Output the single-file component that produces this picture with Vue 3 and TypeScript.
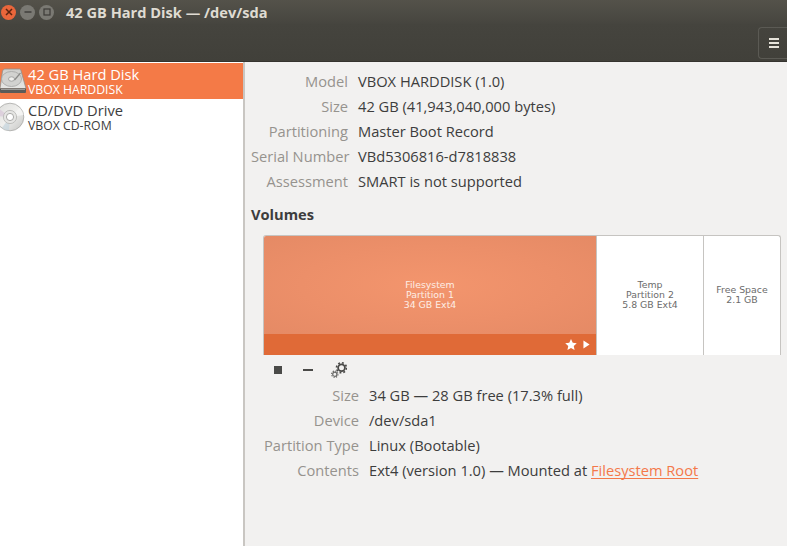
<script setup lang="ts">
interface Row {
  label: string;
  value: string;
}

interface Partition {
  id: string;
  lines: string[];
}

const diskRows: Row[] = [
  { label: 'Model', value: 'VBOX HARDDISK (1.0)' },
  { label: 'Size', value: '42 GB (41,943,040,000 bytes)' },
  { label: 'Partitioning', value: 'Master Boot Record' },
  { label: 'Serial Number', value: 'VBd5306816-d7818838' },
  { label: 'Assessment', value: 'SMART is not supported' },
]

const partitions: Partition[] = [
  { id: 'temp', lines: ['Temp', 'Partition 2', '5.8 GB Ext4'] },
  { id: 'free', lines: ['Free Space', '2.1 GB'] },
]

const volumeRows: Row[] = [
  { label: 'Size', value: '34 GB — 28 GB free (17.3% full)' },
  { label: 'Device', value: '/dev/sda1' },
  { label: 'Partition Type', value: 'Linux (Bootable)' },
]
</script>

<template>
  <div class="window">
    <header class="titlebar">
      <div class="controls">
        <span class="ctl close">
          <svg width="8" height="8" viewBox="0 0 8 8"><path d="M1 1l6 6M7 1L1 7" stroke="#5a2410" stroke-width="1.5" /></svg>
        </span>
        <span class="ctl">
          <svg width="8" height="8" viewBox="0 0 8 8"><path d="M0.5 4h7" stroke="#3c3b37" stroke-width="1.4" /></svg>
        </span>
        <span class="ctl">
          <svg width="8" height="8" viewBox="0 0 8 8"><rect x="1" y="1" width="6" height="6" fill="none" stroke="#3c3b37" stroke-width="1.2" /></svg>
        </span>
      </div>
      <span class="title">42 GB Hard Disk — /dev/sda</span>
    </header>

    <div class="toolbar">
      <button class="menu-btn" type="button">
        <span></span><span></span><span></span>
      </button>
    </div>

    <div class="body">
      <aside class="sidebar">
        <div class="device selected">
          <svg class="device-icon" width="28" height="28" viewBox="0 0 28 28">
            <defs>
              <linearGradient id="hd" x1="0" y1="0" x2="0" y2="1">
                <stop offset="0" stop-color="#cfcfcd" />
                <stop offset="1" stop-color="#e6e6e4" />
              </linearGradient>
            </defs>
            <path d="M4.5 2.5Q5 2 6 2h14.5q1 0 1.3 1L27 21.5H1L3.5 4z" fill="url(#hd)" stroke="#8f8f8d" stroke-width="0.8" />
            <ellipse cx="12.5" cy="12" rx="10" ry="7.5" fill="#d2d2d0" stroke="#a5a5a3" stroke-width="0.8" />
            <ellipse cx="12.5" cy="12" rx="3" ry="2.2" fill="#efefed" stroke="#969694" stroke-width="0.8" />
            <path d="M21.5 6l-6 7" stroke="#8a8a88" stroke-width="1.2" />
            <path d="M1 21.5h26V25q0 1-1 1H2q-1 0-1-1z" fill="#5b5b59" />
            <path d="M2 22.5h24" stroke="#9c9c9a" stroke-width="1" />
          </svg>
          <div class="device-text">
            <div class="device-name">42 GB Hard Disk</div>
            <div class="device-sub">VBOX HARDDISK</div>
          </div>
        </div>
        <div class="device">
          <svg class="device-icon" width="28" height="30" viewBox="0 0 28 30">
            <defs>
              <linearGradient id="cd" x1="0" y1="0" x2="1" y2="1">
                <stop offset="0" stop-color="#dcdcda" />
                <stop offset="0.5" stop-color="#efefed" />
                <stop offset="1" stop-color="#c4c4c2" />
              </linearGradient>
            </defs>
            <circle cx="11" cy="15" r="13.8" fill="url(#cd)" stroke="#a8a8a6" stroke-width="0.8" />
            <path d="M11 15L1 7.5Q-1 11-1.5 14z" fill="#d9c8d8" opacity="0.7" />
            <path d="M11 15L3 26Q7 28.5 10 28.5z" fill="#c6d6de" opacity="0.7" />
            <path d="M11 15L21 6Q24 10 24.5 13z" fill="#f8f8f6" opacity="0.8" />
            <circle cx="11" cy="15" r="6.6" fill="#e6e6e4" stroke="#b5b5b3" stroke-width="0.8" />
            <circle cx="11" cy="15" r="3.6" fill="#fff" stroke="#989896" stroke-width="0.8" />
          </svg>
          <div class="device-text">
            <div class="device-name">CD/DVD Drive</div>
            <div class="device-sub">VBOX CD-ROM</div>
          </div>
        </div>
      </aside>

      <main class="content">
        <div class="props disk-props">
          <template v-for="row in diskRows" :key="row.label">
            <span class="prop-label">{{ row.label }}</span>
            <span class="prop-value">{{ row.value }}</span>
          </template>
        </div>

        <h2 class="volumes">Volumes</h2>

        <div class="graph">
          <div class="part part-main">
            <div class="part-body">
              <span>Filesystem</span>
              <span>Partition 1</span>
              <span>34 GB Ext4</span>
            </div>
            <div class="part-strip">
              <svg width="12" height="11" viewBox="0 0 13 12"><path d="M6.5 0l1.9 4 4.4.5-3.3 3 .9 4.4-3.9-2.2-3.9 2.2.9-4.4L.2 4.5 4.6 4z" fill="#fff" /></svg>
              <svg width="7" height="9" viewBox="0 0 8 10"><path d="M0.5 0.5l7 4.5-7 4.5z" fill="#fff" /></svg>
            </div>
          </div>
          <div v-for="part in partitions" :key="part.id" class="part part-plain" :class="part.id">
            <span v-for="line in part.lines" :key="line">{{ line }}</span>
          </div>
        </div>

        <div class="actions">
          <span class="stop"></span>
          <span class="minus"></span>
          <svg class="gears" width="16" height="16" viewBox="0 0 16 16">
            <circle cx="10.5" cy="5.8" r="3.4" fill="none" stroke="#4a4a48" stroke-width="1.8" />
            <circle cx="10.5" cy="5.8" r="5" fill="none" stroke="#4a4a48" stroke-width="1.6" stroke-dasharray="1.9 2" />
            <circle cx="3.8" cy="12.2" r="2.1" fill="none" stroke="#6a6a68" stroke-width="1.2" />
            <circle cx="3.8" cy="12.2" r="3.2" fill="none" stroke="#6a6a68" stroke-width="1.1" stroke-dasharray="1.3 1.2" />
          </svg>
        </div>

        <div class="props volume-props">
          <template v-for="row in volumeRows" :key="row.label">
            <span class="prop-label">{{ row.label }}</span>
            <span class="prop-value">{{ row.value }}</span>
          </template>
          <span class="prop-label">Contents</span>
          <span class="prop-value">Ext4 (version 1.0) — Mounted at <a class="link">Filesystem Root</a></span>
        </div>
      </main>
    </div>
  </div>
</template>

<style>
html,
body {
  margin: 0;
  overflow: hidden;
}
</style>

<style scoped>
.window {
  width: 787px;
  height: 546px;
  display: flex;
  flex-direction: column;
  overflow: hidden;
  background: #f2f1f0;
  font-family: "Open Sans", "Noto Sans", sans-serif;
  font-size: 14.67px;
  color: #3d3d3d;
}

.titlebar {
  height: 24px;
  display: flex;
  align-items: center;
  background: linear-gradient(#54524a, #46453f);
  flex-shrink: 0;
}

.controls {
  display: flex;
  gap: 4px;
  margin: 0 0 0 1px;
}

.ctl {
  width: 15px;
  height: 15px;
  border-radius: 50%;
  background: #7a7973;
  display: flex;
  align-items: center;
  justify-content: center;
}

.close {
  background: #e9663b;
}

.title {
  margin-left: 12px;
  font-weight: 700;
  font-size: 14.6px;
  color: #dfdbd2;
  white-space: nowrap;
}

.toolbar {
  height: 38px;
  flex-shrink: 0;
  display: flex;
  justify-content: flex-end;
  align-items: flex-end;
  background: linear-gradient(#45443e, #41403a);
  border-bottom: 1px solid #35342f;
  box-sizing: border-box;
  padding-bottom: 2px;
}

.menu-btn {
  width: 29px;
  height: 32px;
  margin-right: 0;
  padding: 0 0 0 2px;
  display: flex;
  flex-direction: column;
  gap: 2px;
  align-items: center;
  justify-content: center;
  background: transparent;
  border: 1px solid #5b5a54;
  border-right: none;
  border-radius: 4px 0 0 4px;
}

.menu-btn span {
  width: 10px;
  height: 2px;
  background: #e6e3da;
}

.body {
  flex: 1;
  display: flex;
  min-height: 0;
}

.sidebar {
  width: 243px;
  flex-shrink: 0;
  background: #fff;
  border-right: 2px solid #c9c6c2;
  padding-top: 1px;
}

.device {
  height: 36px;
  display: flex;
  align-items: center;
  gap: 1px;
  color: #3d3d3d;
}

.device.selected {
  background: #f47a47;
  color: #fff;
}

.device-icon {
  margin-left: -1px;
  flex-shrink: 0;
}

.device-name {
  font-size: 14.67px;
  line-height: 17px;
}

.device-sub {
  font-size: 12.25px;
  line-height: 13px;
}

.content {
  flex: 1;
  min-width: 0;
  padding: 9px 6px 0 6px;
}

.props {
  display: grid;
  row-gap: 5px;
  column-gap: 10px;
  grid-auto-rows: 20px;
  align-items: center;
}

.disk-props {
  grid-template-columns: 97px 1fr;
}

.volume-props {
  grid-template-columns: 108px 1fr;
  margin-top: 1px;
}

.prop-label {
  text-align: right;
  color: #96938e;
  white-space: nowrap;
}

.prop-value {
  white-space: nowrap;
}

.volumes {
  margin: 13px 0 11px;
  font-size: 14.67px;
  line-height: 20px;
  font-weight: 700;
  color: #3d3d3d;
}

.graph {
  margin-left: 12px;
  height: 120px;
  display: flex;
  box-sizing: border-box;
  border: 1px solid #c6c4c1;
  border-bottom: none;
  border-radius: 3px 3px 0 0;
  background: #fff;
  font-family: "DejaVu Sans", sans-serif;
  font-size: 9.35px;
  line-height: 10px;
  overflow: hidden;
}

.part {
  display: flex;
  flex-direction: column;
  align-items: center;
  justify-content: center;
  text-align: center;
  box-sizing: border-box;
}

.part-main {
  width: 332px;
  flex-shrink: 0;
  align-items: stretch;
  color: #fdeee6;
}

.part-body {
  flex: 1;
  display: flex;
  flex-direction: column;
  align-items: center;
  justify-content: center;
  padding-top: 19px;
  background: radial-gradient(ellipse at center, #f3956d 0%, #ec8f69 55%, #e58a65 100%);
}

.part-strip {
  height: 21px;
  display: flex;
  align-items: center;
  justify-content: flex-end;
  gap: 6px;
  padding-right: 6px;
  background: #e06a37;
}

.part-plain {
  color: #6b6b6b;
  border-left: 1px solid #c6c4c1;
  padding-bottom: 2px;
}

.temp {
  width: 107px;
  flex-shrink: 0;
}

.free {
  flex: 1;
}

.actions {
  height: 29px;
  display: flex;
  align-items: center;
  padding-left: 23px;
}

.stop {
  width: 8px;
  height: 8px;
  background: #4a4a48;
}

.minus {
  width: 10px;
  height: 2px;
  margin-left: 21px;
  background: #4a4a48;
}

.gears {
  margin-left: 18px;
}

.link {
  color: #f4784a;
  text-decoration: underline;
  text-decoration-skip-ink: none;
  text-underline-offset: 2px;
}
</style>
